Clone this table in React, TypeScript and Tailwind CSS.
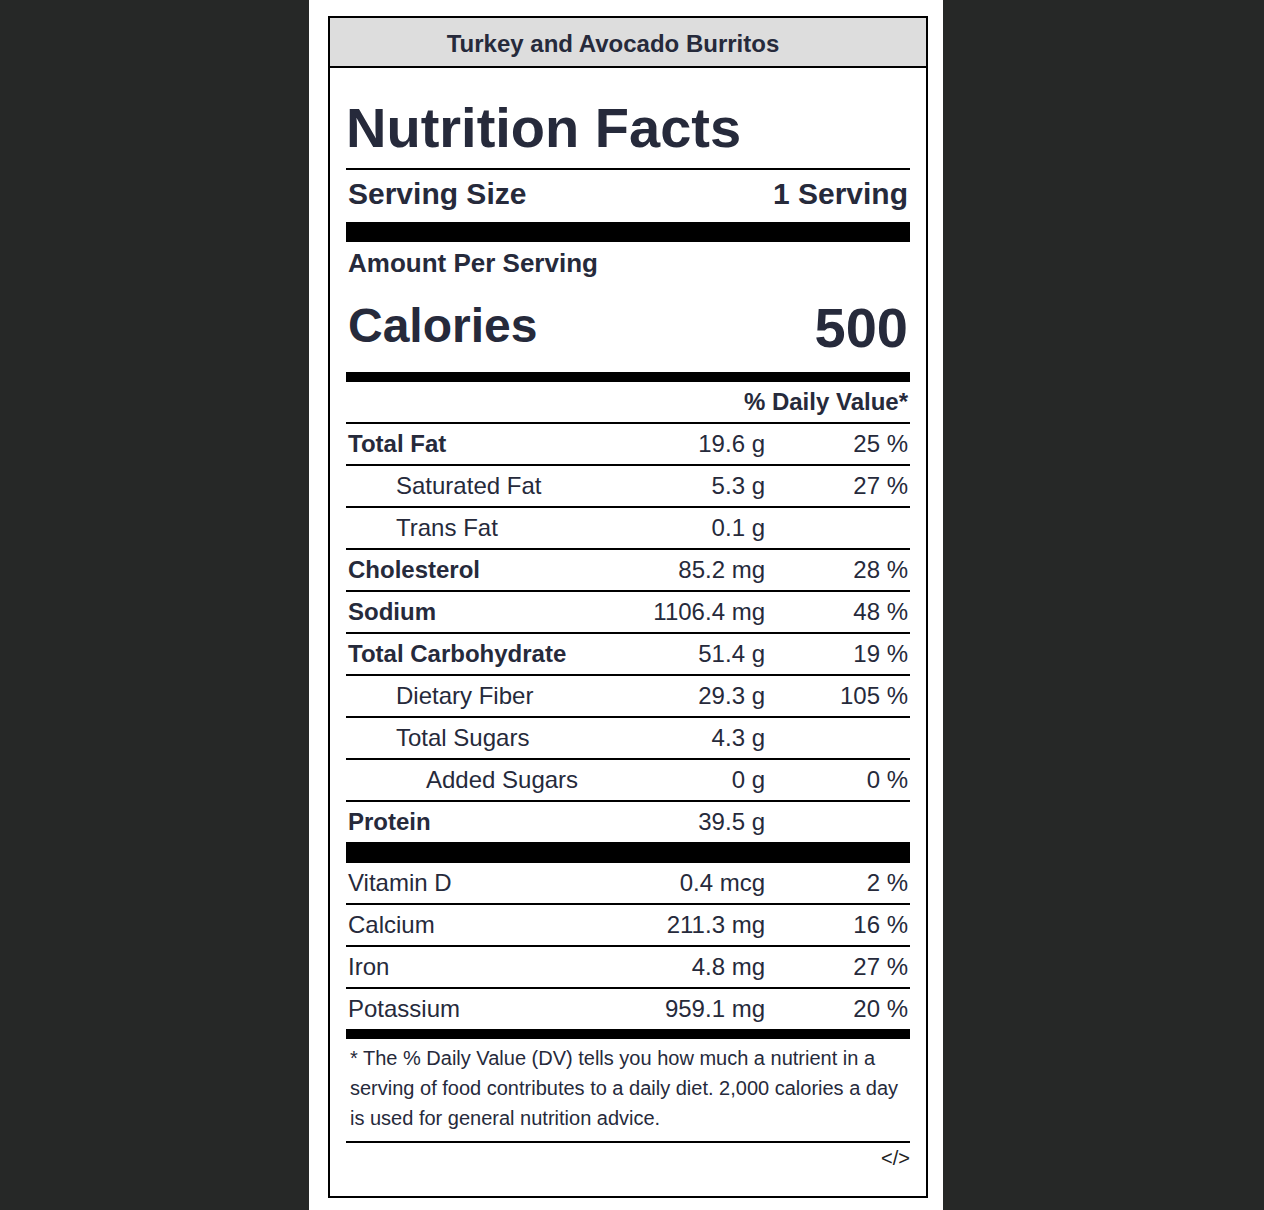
const nutrients = [
  { name: "Total Fat", amount: "19.6 g", dv: "25 %", bold: true, indent: 0 },
  { name: "Saturated Fat", amount: "5.3 g", dv: "27 %", bold: false, indent: 1 },
  { name: "Trans Fat", amount: "0.1 g", dv: "", bold: false, indent: 1 },
  { name: "Cholesterol", amount: "85.2 mg", dv: "28 %", bold: true, indent: 0 },
  { name: "Sodium", amount: "1106.4 mg", dv: "48 %", bold: true, indent: 0 },
  { name: "Total Carbohydrate", amount: "51.4 g", dv: "19 %", bold: true, indent: 0 },
  { name: "Dietary Fiber", amount: "29.3 g", dv: "105 %", bold: false, indent: 1 },
  { name: "Total Sugars", amount: "4.3 g", dv: "", bold: false, indent: 1 },
  { name: "Added Sugars", amount: "0 g", dv: "0 %", bold: false, indent: 2 },
  { name: "Protein", amount: "39.5 g", dv: "", bold: true, indent: 0 },
];

const vitamins = [
  { name: "Vitamin D", amount: "0.4 mcg", dv: "2 %" },
  { name: "Calcium", amount: "211.3 mg", dv: "16 %" },
  { name: "Iron", amount: "4.8 mg", dv: "27 %" },
  { name: "Potassium", amount: "959.1 mg", dv: "20 %" },
];

type RowProps = {
  name: string;
  amount: string;
  dv: string;
  bold?: boolean;
  indent?: number;
  last?: boolean;
};

const Row = ({ name, amount, dv, bold, indent = 0, last }: RowProps) => {
  const indentClass = indent === 2 ? "pl-[78px]" : indent === 1 ? "pl-[48px]" : "";
  return (
    <div
      className={`flex items-center px-[2px] text-[24px] leading-[40px] ${
        last ? "" : "border-b-2 border-black"
      }`}
    >
      <span className={`flex-1 ${bold ? "font-bold" : ""} ${indentClass}`}>{name}</span>
      <span className="text-right">{amount}</span>
      <span className="w-[143px] text-right">{dv}</span>
    </div>
  );
};

export default function App() {
  return (
    <div
      className="min-h-screen bg-[#262827] flex justify-center"
      style={{ fontFamily: '"Liberation Sans", Arial, Helvetica, sans-serif' }}
    >
      <div className="w-[634px] mr-[12px] min-h-[1210px] bg-white pt-[16px] pl-[19px] pr-[15px] text-[#262a3b]">
        <div className="border-2 border-black pb-[23px]">
          {/* recipe title */}
          <div className="bg-[#dddddd] border-b-2 border-black pt-[4px] pr-[30px] text-center text-[24px] leading-[44px] font-bold">
            Turkey and Avocado Burritos
          </div>

          <div className="px-[16px]">
            <h1 className="mt-[28px] text-[56px] leading-[64px] font-bold">Nutrition Facts</h1>
            <div className="mt-[8px] h-[2px] bg-black" />

            <div className="flex justify-between px-[2px] pt-[6px] text-[30px] leading-[36px] font-bold">
              <span>Serving Size</span>
              <span>1 Serving</span>
            </div>
            <div className="mt-[10px] h-[20px] bg-black" />

            <div className="mt-[6px] px-[2px] text-[26px] leading-[30px] font-bold">
              Amount Per Serving
            </div>
            <div className="mt-[18px] flex items-start justify-between px-[2px] font-bold">
              <span className="text-[48px] leading-[60px]">Calories</span>
              <span className="text-[56px] leading-[64px]">500</span>
            </div>
            <div className="mt-[12px] h-[10px] bg-black" />

            <div className="border-b-2 border-black px-[2px] text-right text-[24px] leading-[40px] font-bold">
              % Daily Value*
            </div>

            {nutrients.map((n, i) => (
              <Row key={n.name} {...n} last={i === nutrients.length - 1} />
            ))}
            <div className="h-[21px] bg-black" />

            {vitamins.map((v, i) => (
              <Row key={v.name} {...v} last={i === vitamins.length - 1} />
            ))}
            <div className="h-[10px] bg-black" />

            <p className="border-b-2 border-black pl-[4px] pr-[2px] pt-[4px] pb-[8px] text-[20px] leading-[30px]">
              * The % Daily Value (DV) tells you how much a nutrient in a serving of food
              contributes to a daily diet. 2,000 calories a day is used for general nutrition
              advice.
            </p>
            <div className="text-right text-[20px] leading-[30px] text-[#222222]">&lt;/&gt;</div>
          </div>
        </div>
      </div>
    </div>
  );
}
